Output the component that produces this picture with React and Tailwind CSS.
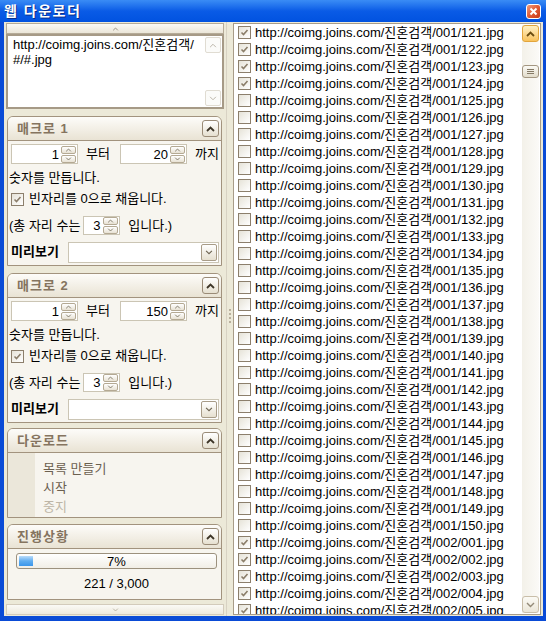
import React from 'react';

function Chevron({ dir = 'up', color = '#4d4535', w = 9, h = 6, sw = 1.6 }) {
  const d = dir === 'up' ? 'M1 5 L4.5 1.5 L8 5' : 'M1 1 L4.5 4.5 L8 1';
  return (
    <svg width={w} height={h} viewBox="0 0 9 6" className="block">
      <path d={d} fill="none" stroke={color} strokeWidth={sw} />
    </svg>
  );
}

function Check({ color = '#8b7e6a' }) {
  return (
    <svg width="9" height="9" viewBox="0 0 9 9" className="block">
      <path d="M1.5 4.5 L3.5 6.5 L7.5 2" fill="none" stroke={color} strokeWidth="1.6" />
    </svg>
  );
}

function CheckBox({ checked }) {
  return (
    <div className="w-[13px] h-[13px] shrink-0 border border-[#8c7f6c] bg-gradient-to-br from-[#e6e3d8] to-white flex items-center justify-center">
      {checked ? <Check /> : null}
    </div>
  );
}

function Spinner() {
  return (
    <div className="flex flex-col gap-[1px] w-[15px]">
      <div className="h-[8px] border border-[#b4a993] rounded-[2px] bg-gradient-to-b from-white to-[#e8e2d4] flex items-center justify-center">
        <Chevron dir="up" w={7} h={4} sw={1.2} color="#6d6452" />
      </div>
      <div className="h-[8px] border border-[#b4a993] rounded-[2px] bg-gradient-to-b from-white to-[#e8e2d4] flex items-center justify-center">
        <Chevron dir="down" w={7} h={4} sw={1.2} color="#6d6452" />
      </div>
    </div>
  );
}

function NumBox({ value, w }) {
  return (
    <div className={`${w} h-[20px] border border-[#cbc5b4] bg-white flex items-center justify-end pr-[1px] gap-[2px]`}>
      <span className="leading-none">{value}</span>
      <Spinner />
    </div>
  );
}

function CollapseBtn() {
  return (
    <div className="w-[17px] h-[17px] border border-[#9a8b77] rounded-[3px] bg-gradient-to-b from-white to-[#e6e0d0] flex items-center justify-center">
      <Chevron dir="up" w={9} h={6} sw={1.8} color="#3e3628" />
    </div>
  );
}

function Group({ title, className = '', children }) {
  return (
    <div className={`shrink-0 border border-[#a2937e] rounded-t-[6px] overflow-hidden ${className}`}>
      <div className="h-[24px] flex items-center justify-between pl-[9px] pr-[2px] bg-gradient-to-b from-[#fdfcf9] to-[#e9e3d4] border-b border-[#a2937e]">
        <span className="font-bold text-[#85745f] tracking-[1px]">{title}</span>
        <CollapseBtn />
      </div>
      <div className="bg-[#f7f5ef]">{children}</div>
    </div>
  );
}

function Macro({ title, to, className }) {
  return (
    <Group title={title} className={className}>
      <div className="flex flex-col pt-[3px] pb-[3px] pl-[3px] pr-[2px]">
        <div className="flex items-center h-[20px]">
          <NumBox value="1" w="w-[67px]" />
          <span className="ml-[8px]">부터</span>
          <div className="ml-[10px]">
            <NumBox value={to} w="w-[67px]" />
          </div>
          <span className="ml-[8px]">까지</span>
        </div>
        <div className="h-[20px] mt-[4px] flex items-center -ml-[2px]">숫자를 만듭니다.</div>
        <div className="h-[18px] mt-[2px] flex items-center gap-[5px]">
          <CheckBox checked />
          <span>빈자리를 0으로 채웁니다.</span>
        </div>
        <div className="h-[19px] mt-[8px] flex items-center -ml-[2px]">
          <span>(총 자리 수는</span>
          <div className="ml-[3px] w-[37px] h-[19px] border border-[#cbc5b4] bg-white flex items-center justify-end pr-[1px] gap-[3px]">
            <span className="leading-none">3</span>
            <Spinner />
          </div>
          <span className="ml-[8px]">입니다.)</span>
        </div>
        <div className="h-[20px] mt-[7px] flex items-center">
          <span className="font-bold text-black w-[57px]">미리보기</span>
          <div className="flex-1 h-[21px] border border-[#cbc5b4] bg-white flex items-center justify-end pr-[1px]">
            <div className="w-[16px] h-[17px] border border-[#a89c88] rounded-[2px] bg-gradient-to-b from-white to-[#e6e0d0] flex items-center justify-center">
              <Chevron dir="down" w={8} h={5} sw={1.3} color="#6d6452" />
            </div>
          </div>
        </div>
      </div>
    </Group>
  );
}

const items = [];
for (let i = 121; i <= 150; i++) items.push({ path: `001/${i}`, checked: i <= 124 });
for (let i = 1; i <= 6; i++) items.push({ path: `002/00${i}`, checked: true });

export default function App() {
  return (
    <div className="w-[546px] h-[621px] flex flex-col bg-[#0a4bd6] text-[13px] text-black font-['Liberation_Sans','Noto_Sans_CJK_KR',sans-serif] overflow-hidden select-none">
      {/* title bar */}
      <div className="h-[22px] shrink-0 flex items-center justify-between pl-[4px] pr-[5px] bg-gradient-to-b from-[#3a8cf5] via-[#0a5be6] to-[#0152e0]">
        <span className="text-white font-bold text-[14px] tracking-[1.5px] [text-shadow:1px_1px_0_#0a2f8a]">웹 다운로더</span>
        <div className="w-[15px] h-[15px] rounded-[3px] border border-white bg-gradient-to-br from-[#f09a7c] via-[#e05a34] to-[#c53a18] flex items-center justify-center">
          <svg width="9" height="9" viewBox="0 0 9 9" className="block">
            <path d="M1.5 1.5 L7.5 7.5 M7.5 1.5 L1.5 7.5" stroke="white" strokeWidth="2" />
          </svg>
        </div>
      </div>

      {/* window body */}
      <div className="flex-1 flex ml-[4px] mr-[3px] mb-[5px] bg-[#ece9d8] min-h-0">
        {/* left panel */}
        <div className="w-[222px] flex flex-col pl-[2px] pr-[2px]">
          <div className="shrink-0 mt-[1px] h-[11px] border border-[#b5ab98] bg-gradient-to-b from-[#fbfaf6] to-[#ebe6d8] flex items-center justify-center">
            <Chevron dir="up" w={7} h={4} sw={1.2} color="#8a8070" />
          </div>
          <div className="shrink-0 h-[75px] border-2 border-[#a69a86] bg-white flex">
            <div className="flex-1 pl-[5px] pt-[1px] leading-[15px]">
              <div>http://coimg.joins.com/진혼검객/</div>
              <div>#/#.jpg</div>
            </div>
            <div className="w-[17px] flex flex-col justify-between py-[1px] pr-[1px]">
              <div className="h-[16px] border border-[#e0dcd2] rounded-[2px] bg-[#fbfbf9] flex items-center justify-center">
                <Chevron dir="up" w={8} h={5} sw={1.2} color="#bcb6aa" />
              </div>
              <div className="h-[16px] border border-[#e0dcd2] rounded-[2px] bg-[#fbfbf9] flex items-center justify-center">
                <Chevron dir="down" w={8} h={5} sw={1.2} color="#bcb6aa" />
              </div>
            </div>
          </div>

          <div className="ml-[1px] mr-[2px] flex flex-col">
            <Macro title="매크로 1" to="20" className="mt-[7px]" />
            <Macro title="매크로 2" to="150" className="mt-[7px]" />
            <Group title="다운로드" className="mt-[5px]">
              <div className="flex">
                <div className="w-[27px] bg-[#ebe7da]" />
                <div className="flex flex-col pt-[6px] pb-[1px] pl-[8px]">
                  <div className="h-[19px] flex items-center text-[#6b604f]">목록 만들기</div>
                  <div className="h-[19px] flex items-center text-[#6b604f]">시작</div>
                  <div className="h-[19px] flex items-center text-[#bdb5a6]">중지</div>
                </div>
              </div>
            </Group>
            <Group title="진행상황" className="mt-[6px]">
              <div className="flex flex-col pt-[4px] pb-[7px] pl-[8px] pr-[4px]">
                <div className="relative h-[16px] border border-[#9c917e] rounded-[3px] bg-gradient-to-b from-white to-[#f1eee6] flex items-center p-[2px]">
                  <div className="h-full w-[14px] bg-gradient-to-b from-[#b9dcfa] via-[#5fadf0] to-[#3b96ea]" />
                  <span className="absolute inset-0 flex items-center justify-center leading-none">7%</span>
                </div>
                <div className="h-[16px] mt-[7px] flex items-center justify-center">221 / 3,000</div>
              </div>
            </Group>
          </div>

          <div className="shrink-0 mt-[4px] h-[11px] border border-[#d3cbbb] bg-gradient-to-b from-[#fbfaf6] to-[#ede9dd] flex items-center justify-center">
            <Chevron dir="down" w={7} h={4} sw={1.2} color="#b0a898" />
          </div>
        </div>

        {/* splitter */}
        <div className="w-[7px] flex items-center justify-center border-l border-[#d8d2c3]">
          <div className="flex flex-col gap-[2px] -mt-[6px]">
            <div className="w-[2px] h-[2px] bg-[#b8af9c]" />
            <div className="w-[2px] h-[2px] bg-[#b8af9c]" />
            <div className="w-[2px] h-[2px] bg-[#b8af9c]" />
            <div className="w-[2px] h-[2px] bg-[#b8af9c]" />
          </div>
        </div>

        {/* file list */}
        <div className="w-[308px] mt-[1px] mb-[1px] border border-[#a89c88] bg-white flex min-h-0">
          <div className="flex-1 overflow-hidden pl-[4px]">
            {items.map((it) => (
              <div key={it.path} className="h-[17px] flex items-center gap-[4px] whitespace-nowrap">
                <CheckBox checked={it.checked} />
                <span>http://coimg.joins.com/진혼검객/{it.path}.jpg</span>
              </div>
            ))}
          </div>
          <div className="w-[17px] mr-[1px] my-[1px] flex flex-col bg-gradient-to-r from-[#f3f1e9] to-[#fbfaf7]">
            <div className="h-[17px] border border-[#e2a53c] rounded-[3px] bg-gradient-to-b from-[#fff1c4] to-[#f8c25a] flex items-center justify-center">
              <Chevron dir="up" w={9} h={6} sw={1.8} color="#6a4c10" />
            </div>
            <div className="mt-[23px] h-[13px] border border-[#a39681] rounded-[3px] bg-gradient-to-b from-[#fbfaf5] to-[#e2dccb] flex flex-col items-center justify-center gap-[1px]">
              <div className="w-[7px] h-[1px] bg-[#857a66]" />
              <div className="w-[7px] h-[1px] bg-[#857a66]" />
              <div className="w-[7px] h-[1px] bg-[#857a66]" />
            </div>
            <div className="flex-1" />
            <div className="h-[17px] border border-[#c9bea9] rounded-[3px] bg-gradient-to-b from-[#fbfaf5] to-[#ebe6d8] flex items-center justify-center">
              <Chevron dir="down" w={9} h={6} sw={1.4} color="#948a78" />
            </div>
          </div>
        </div>
      </div>
    </div>
  );
}
